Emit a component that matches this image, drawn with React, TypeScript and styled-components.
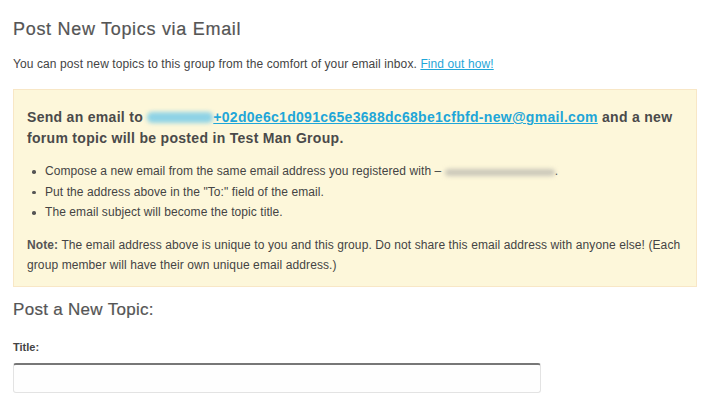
import React from 'react';
import styled, { createGlobalStyle } from 'styled-components';

const GlobalStyle = createGlobalStyle`
  html, body {
    margin: 0;
    padding: 0;
    background: #ffffff;
  }
  body {
    font-family: 'Liberation Sans', Arial, sans-serif;
    color: #444444;
  }
`;

const Page = styled.div`
  padding: 18px 13px 0 13px;
  width: 684px;
`;

const Heading = styled.h2<{ size: number; spacing: number }>`
  margin: 0;
  font-size: ${(p) => p.size}px;
  letter-spacing: ${(p) => p.spacing}px;
  font-weight: normal;
  color: #555555;
  line-height: 22px;
  -webkit-text-stroke: 0.2px #555555;
`;

const Intro = styled.p`
  margin: 17px 0 0 0;
  font-size: 12px;
  letter-spacing: 0.1px;
  line-height: 15px;
  color: #444444;
`;

const Link = styled.a`
  color: #1fa6d8;
  text-decoration: underline;
`;

const InfoBox = styled.div`
  margin-top: 17px;
  background: #fdf7da;
  border: 1px solid #f8e7c6;
  padding: 17px 13px 11px 13px;
`;

const Lead = styled.p`
  margin: 0;
  font-size: 14px;
  letter-spacing: 0.3px;
  font-weight: bold;
  line-height: 21px;
  color: #4a4a4a;
`;

const Blur = styled.span<{ tone: string; w: number; h: number }>`
  display: inline-block;
  width: ${(p) => p.w}px;
  height: ${(p) => p.h}px;
  vertical-align: -1px;
  border-radius: 5px;
  background: ${(p) => p.tone};
  filter: blur(2px);
`;

const Steps = styled.ul`
  margin: 12px 0 0 0;
  padding: 0 0 0 18px;
  font-size: 12px;
  letter-spacing: 0.08px;
  line-height: 20.5px;
  color: #444444;
  list-style: none;
`;

const Step = styled.li`
  position: relative;
  &::before {
    content: '';
    position: absolute;
    left: -13px;
    top: 9px;
    width: 3.5px;
    height: 3.5px;
    border-radius: 50%;
    background: #555555;
  }
`;

const Note = styled.p`
  margin: 12px 0 0 0;
  font-size: 12px;
  letter-spacing: 0.1px;
  line-height: 20px;
  color: #444444;
  b {
    color: #555555;
  }
`;

const SubHeading = styled(Heading)`
  margin-top: 12px;
`;

const FieldLabel = styled.label`
  display: block;
  margin-top: 19px;
  font-size: 11px;
  font-weight: bold;
  color: #444444;
  line-height: 14px;
`;

const TextInput = styled.input`
  display: block;
  box-sizing: border-box;
  margin-top: 9px;
  width: 528px;
  height: 30px;
  border: 1px solid #e3e3e3;
  border-top: 2px solid #777777;
  border-radius: 3px;
  background: #fefefe;
  outline: none;
`;

export default function App() {
  return (
    <>
      <GlobalStyle />
      <Page>
        <Heading size={18} spacing={0.7}>
          Post New Topics via Email
        </Heading>
        <Intro>
          You can post new topics to this group from the comfort of your email inbox. <Link href="#">Find out how!</Link>
        </Intro>
        <InfoBox>
          <Lead>
            Send an email to <Blur tone="#8fd3e6" w={66} h={11} />
            <Link href="#">+02d0e6c1d091c65e3688dc68be1cfbfd-new@gmail.com</Link> and a new forum topic will be
            posted in Test Man Group.
          </Lead>
          <Steps>
            <Step>
              Compose a new email from the same email address you registered with –{' '}
              <Blur tone="#cbc8ba" w={110} h={7} />.
            </Step>
            <Step>Put the address above in the "To:" field of the email.</Step>
            <Step>The email subject will become the topic title.</Step>
          </Steps>
          <Note>
            <b>Note:</b> The email address above is unique to you and this group. Do not share this email address with
            anyone else! (Each group member will have their own unique email address.)
          </Note>
        </InfoBox>
        <SubHeading as="h3" size={17} spacing={0.3}>
          Post a New Topic:
        </SubHeading>
        <FieldLabel htmlFor="title">Title:</FieldLabel>
        <TextInput id="title" type="text" />
      </Page>
    </>
  );
}
